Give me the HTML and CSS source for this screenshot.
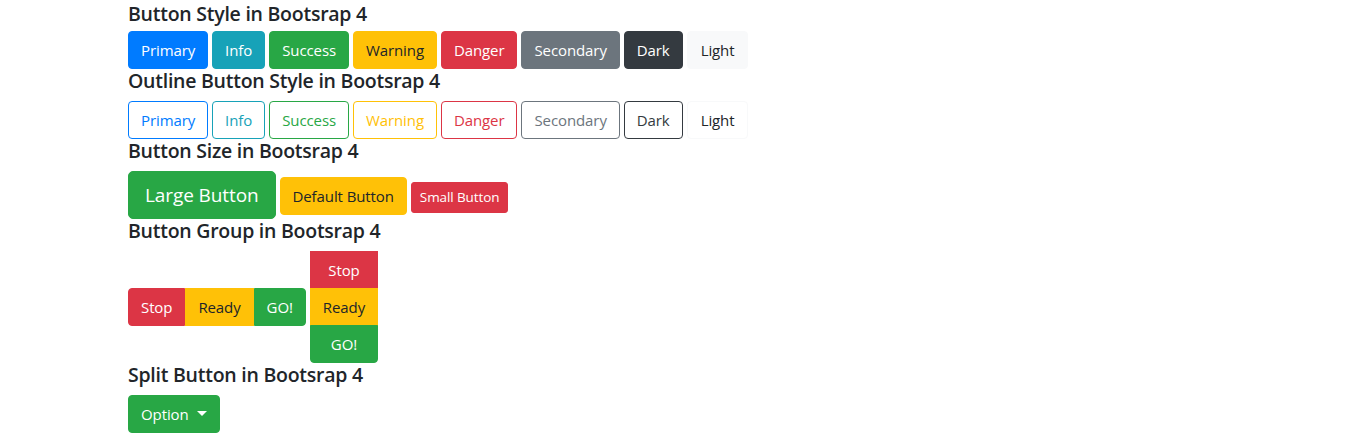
FILE: index.html
```html
<!DOCTYPE html>
<html>
<head>
<meta charset="utf-8">
<link rel="stylesheet" href="styles.css">
</head>
<body>
<div class="container">
  <h5 class="title first">Button Style in Bootsrap 4</h5>
  <div class="row">
    <button class="btn primary">Primary</button>
    <button class="btn info">Info</button>
    <button class="btn success">Success</button>
    <button class="btn warning">Warning</button>
    <button class="btn danger">Danger</button>
    <button class="btn secondary">Secondary</button>
    <button class="btn dark">Dark</button>
    <button class="btn light">Light</button>
  </div>
  <h5 class="title">Outline Button Style in Bootsrap 4</h5>
  <div class="row">
    <button class="btn o-primary">Primary</button>
    <button class="btn o-info">Info</button>
    <button class="btn o-success">Success</button>
    <button class="btn o-warning">Warning</button>
    <button class="btn o-danger">Danger</button>
    <button class="btn o-secondary">Secondary</button>
    <button class="btn o-dark">Dark</button>
    <button class="btn o-light">Light</button>
  </div>
  <h5 class="title">Button Size in Bootsrap 4</h5>
  <div class="row baseline">
    <button class="btn success lg">Large Button</button>
    <button class="btn warning">Default Button</button>
    <button class="btn danger sm">Small Button</button>
  </div>
  <h5 class="title">Button Group in Bootsrap 4</h5>
  <div class="row middle">
    <div class="group">
      <button class="btn danger">Stop</button>
      <button class="btn warning">Ready</button>
      <button class="btn success">GO!</button>
    </div>
    <div class="group-v">
      <button class="btn danger">Stop</button>
      <button class="btn warning">Ready</button>
      <button class="btn success">GO!</button>
    </div>
  </div>
  <h5 class="title">Split Button in Bootsrap 4</h5>
  <div class="row">
    <button class="btn success">Option<span class="caret"></span></button>
  </div>
</div>
</body>
</html>
```
FILE: styles.css
```css
html, body {
  margin: 0;
  padding: 0;
  background: #fff;
}
body {
  font-family: "Open Sans", "Noto Sans", sans-serif;
  font-size: 16px;
  line-height: 1.5;
  color: #212529;
}
.container {
  width: 1110px;
  margin: 0 auto;
  padding: 0 15px;
}
.title {
  font-size: 19.5px;
  font-weight: 600;
  line-height: 24px;
  height: 24px;
  margin: 0 0 8px;
  letter-spacing: -0.25px;
}
.title.first {
  line-height: 27px;
  height: 27px;
  margin-bottom: 4px;
}
.row {
  display: flex;
  gap: 4px;
  align-items: flex-start;
}
.row.baseline { align-items: baseline; }
.row.middle { align-items: center; }
.btn {
  font-family: inherit;
  font-size: 15px;
  line-height: 24px;
  padding: 6px 12px;
  border: 1px solid transparent;
  border-radius: 4px;
  background: transparent;
  color: #212529;
  cursor: pointer;
  white-space: nowrap;
  letter-spacing: -0.1px;
}
.primary { background: #007bff; border-color: #007bff; color: #fff; }
.info { background: #17a2b8; border-color: #17a2b8; color: #fff; }
.success { background: #28a745; border-color: #28a745; color: #fff; }
.warning { background: #ffc107; border-color: #ffc107; color: #212529; }
.danger { background: #dc3545; border-color: #dc3545; color: #fff; }
.secondary { background: #6c757d; border-color: #6c757d; color: #fff; }
.dark { background: #343a40; border-color: #343a40; color: #fff; }
.light { background: #f8f9fa; border-color: #f8f9fa; color: #212529; }

.o-primary { border-color: #007bff; color: #007bff; }
.o-info { border-color: #17a2b8; color: #17a2b8; }
.o-success { border-color: #28a745; color: #28a745; }
.o-warning { border-color: #ffc107; color: #ffc107; }
.o-danger { border-color: #dc3545; color: #dc3545; }
.o-secondary { border-color: #6c757d; color: #6c757d; }
.o-dark { border-color: #343a40; color: #343a40; }
.o-light { border-color: #f8f9fa; color: #212529; }

.btn.light, .btn.o-light { padding: 6px 13px; }

.btn.lg {
  font-size: 19px;
  line-height: 30px;
  padding: 8px 16px;
  border-radius: 5px;
}
.btn.sm {
  font-size: 13.5px;
  line-height: 21px;
  padding: 4px 8px;
  border-radius: 3px;
}
.group {
  display: flex;
}
.group .btn { border-radius: 0; }
.group .btn:first-child { border-radius: 4px 0 0 4px; }
.group .btn:last-child { border-radius: 0 4px 4px 0; }
.group-v {
  display: flex;
  flex-direction: column;
}
.group-v .btn { border-radius: 0; }
.group-v .btn + .btn { margin-top: -1px; }
.group-v .btn:last-child { border-radius: 0 0 4px 4px; }
.caret {
  display: inline-block;
  margin-left: 8px;
  vertical-align: 4px;
  border-top: 5px solid #fff;
  border-left: 5px solid transparent;
  border-right: 5px solid transparent;
}
```
